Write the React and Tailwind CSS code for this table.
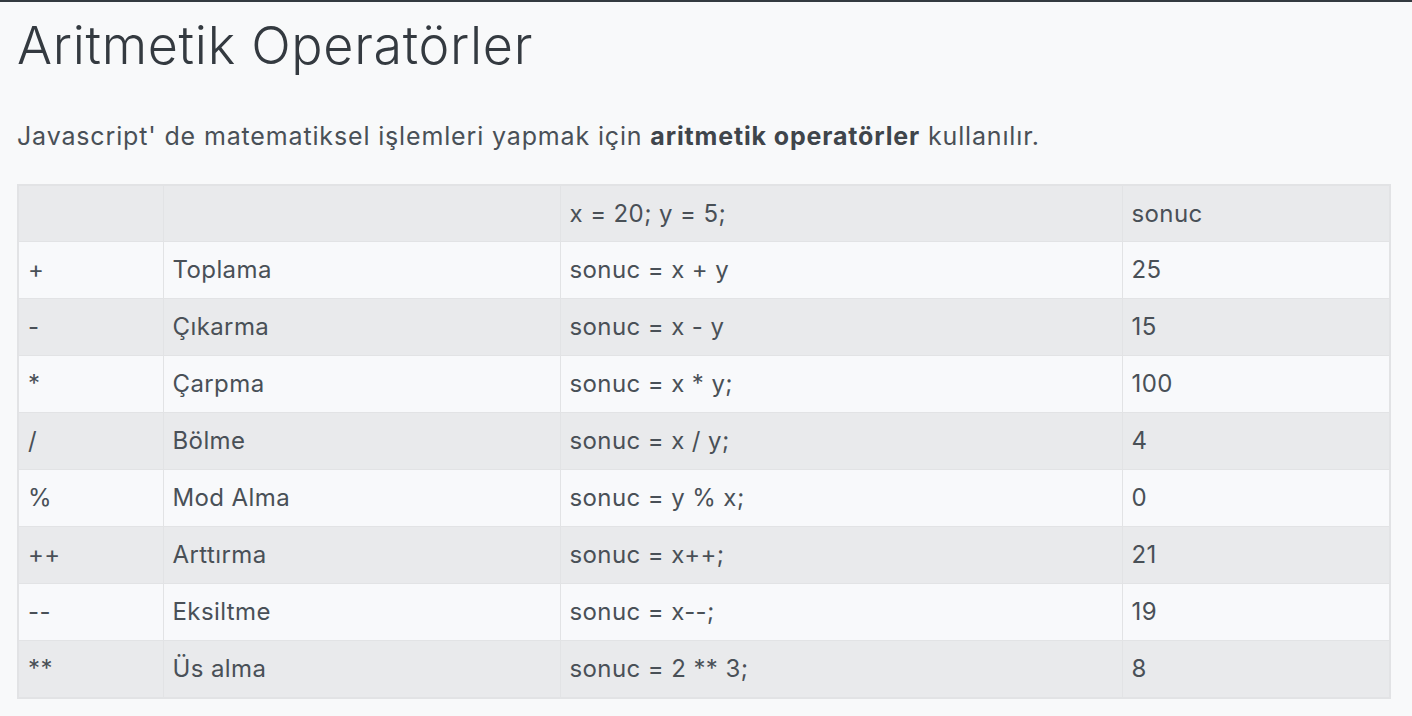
import React from 'react';

const rows = [
  ['+', 'Toplama', 'sonuc = x + y', '25'],
  ['-', 'Çıkarma', 'sonuc = x - y', '15'],
  ['*', 'Çarpma', 'sonuc = x * y;', '100'],
  ['/', 'Bölme', 'sonuc = x / y;', '4'],
  ['%', 'Mod Alma', 'sonuc = y % x;', '0'],
  ['++', 'Arttırma', 'sonuc = x++;', '21'],
  ['--', 'Eksiltme', 'sonuc = x--;', '19'],
  ['**', 'Üs alma', 'sonuc = 2 ** 3;', '8'],
];

function App() {
  return (
    <div className="min-h-screen bg-[#f8f9fa] border-t-2 border-[#343a40] text-[#495057] font-['Inter',sans-serif] px-[17px] pt-[13px] pb-[19px]">
      <h1 className="text-[52px] font-light leading-[1.2] tracking-[0.7px] text-[#343a40]">Aritmetik Operatörler</h1>
      <p className="text-[25px] mt-[41px] leading-[1.5] tracking-[0.85px]">
        Javascript' de matematiksel işlemleri yapmak için <b className="font-bold text-[#3f454b]">aritmetik operatörler</b> kullanılır.
      </p>
      <table className="mt-[28px] w-[1372px] table-fixed border-collapse border-2 border-[#e2e3e5] text-[24px] tracking-[0.4px]">
        <colgroup>
          <col className="w-[145px]" />
          <col className="w-[397px]" />
          <col className="w-[562px]" />
          <col className="w-[268px]" />
        </colgroup>
        <thead>
          <tr className="bg-[#e9eaec] h-[57px]">
            <td className="border border-[#e2e3e5] px-[9px]"></td>
            <td className="border border-[#e2e3e5] px-[9px]"></td>
            <td className="border border-[#e2e3e5] px-[9px]">x = 20; y = 5;</td>
            <td className="border border-[#e2e3e5] px-[9px]">sonuc</td>
          </tr>
        </thead>
        <tbody>
          {rows.map((r, i) => (
            <tr key={i} className={i % 2 === 1 ? 'bg-[#e9eaec] h-[57px]' : 'bg-[#f8f9fb] h-[57px]'}>
              {r.map((c, j) => (
                <td key={j} className="border border-[#e2e3e5] px-[9px]">{c}</td>
              ))}
            </tr>
          ))}
        </tbody>
      </table>
    </div>
  );
}

export default App;
